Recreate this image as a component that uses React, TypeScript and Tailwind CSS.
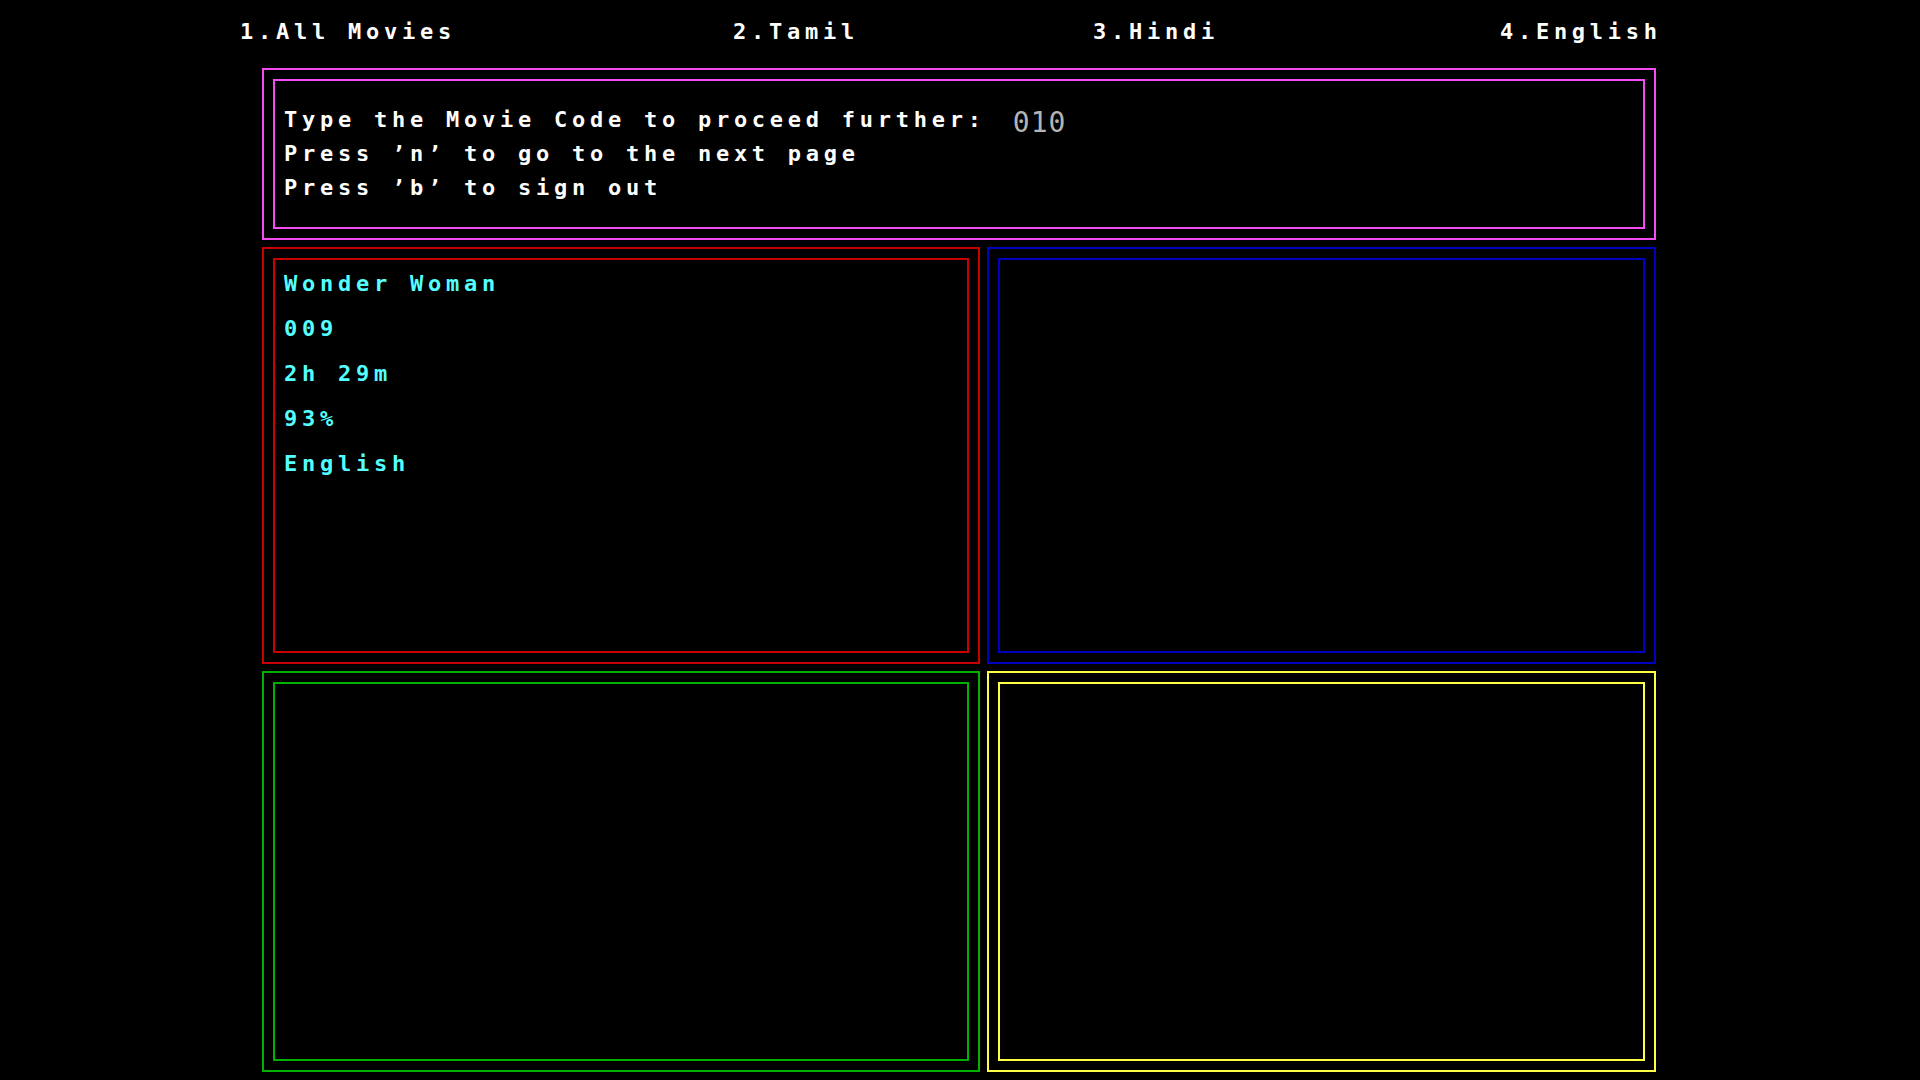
import React from "react";

const FONT = "font-['DejaVu_Sans_Mono','Liberation_Mono',monospace]";

function Box({
  outer,
  inner,
  className = "",
  children,
}: {
  outer: string;
  inner: string;
  className?: string;
  children?: React.ReactNode;
}) {
  return (
    <div className={`border-2 ${outer} p-[9px] ${className}`}>
      <div className={`border-2 ${inner} h-full w-full`}>{children}</div>
    </div>
  );
}

export default function App() {
  const txt = "text-[22px] font-bold tracking-[4.75px] whitespace-pre";
  return (
    <div className={`w-[1920px] h-[1080px] bg-black overflow-hidden ${FONT}`}>
      <nav className={`h-[62px] flex items-center pl-[240px] text-white ${txt}`}>
        <span>1.All Movies</span>
        <span className="ml-[277px]">2.Tamil</span>
        <span className="ml-[234px]">3.Hindi</span>
        <span className="ml-[281px]">4.English</span>
      </nav>
      <div className="mt-[6px] ml-[262px] w-[1394px] flex flex-col gap-[7px]">
        <Box outer="border-[#f24cf2]" inner="border-[#f24cf2]" className="h-[172px]">
          <div className={`pt-[22px] pl-[9px] text-white ${txt} leading-[34px]`}>
            <div className="flex items-center h-[34px]">
              <span>Type the Movie Code to proceed further:</span>
              <span className="ml-[27px] mt-[5px] font-normal tracking-[1px] text-[28px] text-[#b4b4b4]">010</span>
            </div>
            <div>Press ’n’ to go to the next page</div>
            <div>Press ’b’ to sign out</div>
          </div>
        </Box>
        <div className="grid grid-cols-[718px_669px] grid-rows-[417px_401px] gap-[7px]">
          <Box outer="border-[#c80000]" inner="border-[#c80000]">
            <div className={`pl-[9px] pt-[1px] text-[#55ffff] ${txt} leading-[45px]`}>
              <div>Wonder Woman</div>
              <div>009</div>
              <div>2h 29m</div>
              <div>93%</div>
              <div>English</div>
            </div>
          </Box>
          <Box outer="border-[#0000c0]" inner="border-[#0000c0]" />
          <Box outer="border-[#00b000]" inner="border-[#00b000]" />
          <Box outer="border-[#ffff44]" inner="border-[#ffff44]" />
        </div>
      </div>
    </div>
  );
}
